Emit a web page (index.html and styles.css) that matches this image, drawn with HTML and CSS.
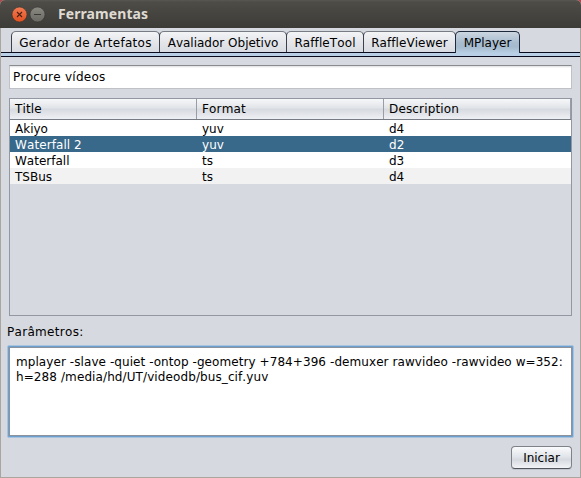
FILE: index.html
```html
<!DOCTYPE html>
<html lang="pt">
<head>
<meta charset="utf-8">
<title>Ferramentas</title>
<link rel="stylesheet" href="styles.css">
</head>
<body>
<div class="window">
  <header class="titlebar">
    <svg class="controls" width="40" height="20" viewBox="0 0 40 20">
      <defs>
        <linearGradient id="close" x1="0" y1="0" x2="0" y2="1"><stop offset="0" stop-color="#f37c54"/><stop offset="1" stop-color="#e2501f"/></linearGradient>
        <linearGradient id="mini" x1="0" y1="0" x2="0" y2="1"><stop offset="0" stop-color="#8b8982"/><stop offset="1" stop-color="#696862"/></linearGradient>
      </defs>
      <circle cx="9.5" cy="10.5" r="7.5" fill="url(#close)" stroke="#35322d" stroke-width=".6"/>
      <path d="M7 8l5 5M12 8l-5 5" stroke="#4a2015" stroke-width="1.1"/>
      <circle cx="27.5" cy="10.5" r="7.5" fill="url(#mini)" stroke="#35342f" stroke-width=".6"/>
      <path d="M24 10.5h7" stroke="#3a3934" stroke-width="1"/>
    </svg>
    <h1 class="title">Ferramentas</h1>
  </header>
  <main class="content">
    <nav class="tabs">
      <button class="tab tab-generator"><span>Gerador de Artefatos</span></button>
      <button class="tab tab-evaluator"><span>Avaliador Objetivo</span></button>
      <button class="tab tab-raffle"><span>RaffleTool</span></button>
      <button class="tab tab-viewer"><span>RaffleViewer</span></button>
      <button class="tab tab-player active"><span>MPlayer</span></button>
    </nav>
    <div class="tab-band"></div>
    <section class="panel">
      <input class="search" type="text" value="Procure vídeos">
      <div class="table-box">
        <div class="row head"><span>Title</span><span>Format</span><span>Description</span></div>
        <div class="row"><span>Akiyo</span><span>yuv</span><span>d4</span></div>
        <div class="row selected"><span>Waterfall 2</span><span>yuv</span><span>d2</span></div>
        <div class="row"><span>Waterfall</span><span>ts</span><span>d3</span></div>
        <div class="row alt"><span>TSBus</span><span>ts</span><span>d4</span></div>
      </div>
      <div class="label">Parâmetros:</div>
      <div class="params"><div class="params-text"><div class="line1">mplayer -slave -quiet -ontop -geometry +784+396 -demuxer rawvideo -rawvideo w=352:</div><div class="line2">h=288 /media/hd/UT/videodb/bus_cif.yuv</div></div></div>
      <button class="start"><span>Iniciar</span></button>
    </section>
  </main>
</div>
</body>
</html>
```
FILE: styles.css
```css
* { box-sizing: border-box; }
body {
  margin: 0;
  background: #b04a4c;
  color: #000;
  font: 12px/16px "DejaVu Sans", sans-serif;
  font-kerning: none;
}
button, input { margin: 0; padding: 0; color: inherit; font: inherit; font-kerning: none; }
.window {
  display: flex;
  flex-direction: column;
  width: 581px;
  height: 478px;
  overflow: hidden;
  border-radius: 5px 5px 0 0;
  background: #d6d9df;
}
.titlebar {
  display: flex;
  flex: none;
  height: 28px;
  padding: 4px 0 0 10px;
  background: linear-gradient(#595751 0, #4e4c47 2px, #3c3b37 100%);
}
.title {
  margin: 0 0 0 8px;
  color: #dfdbd2;
  font: bold 14px/20px "Noto Sans", sans-serif;
  letter-spacing: .08px;
}
.content {
  flex: 1;
  border: 1px solid #aaa59e;
  border-top: 0;
}
.tabs {
  display: flex;
  height: 25px;
  padding: 3px 0 0 10px;
  border-bottom: 1px solid #0b0b20;
}
.tab {
  height: 21px;
  margin-right: -1px;
  padding-top: 2px;
  border: 1px solid #3c404b;
  border-top-color: #777b83;
  border-bottom: 0;
  border-radius: 5px 5px 0 0;
  background: linear-gradient(#f3f4f6, #e4e6ea 50%, #d8dbe1);
  line-height: 18px;
  white-space: nowrap;
}
.tab-generator { width: 149px; letter-spacing: .3px; }
.tab-evaluator { width: 128px; }
.tab-raffle { width: 78px; letter-spacing: .1px; }
.tab-viewer { width: 93px; letter-spacing: .05px; }
.tab-player { width: 65px; }
.active {
  height: 22px;
  padding-bottom: 1px;
  border-color: #1d2a3c;
  background: linear-gradient(#ccd7e1, #a9bdcf 50%, #a5bacd 70%, #b8cee2);
}
.tab-band {
  height: 4px;
  border-bottom: 1px solid #0b0b20;
  background: #b8cfe5;
}
.panel {
  display: flex;
  flex-direction: column;
  padding: 8px 8px 0;
}
.search {
  height: 24px;
  padding: 0 3px;
  border: 1px solid #bfc1c6;
  border-top: 1px solid #888b90;
  border-radius: 0;
  outline: 0;
  background: linear-gradient(#dedede, #fff 2px);
  letter-spacing: .26px;
}
.table-box {
  height: 218px;
  margin-top: 9px;
  border: 1px solid #9297a1;
}
.row {
  display: grid;
  grid-template-columns: 187px 187px 1fr;
  height: 16px;
  background: #fff;
  line-height: 18px;
}
.row span { height: 100%; padding-left: 5px; }
.head {
  height: 21px;
  border-bottom: 1px solid #767b84;
  background: linear-gradient(#f6f7f9, #e1e4e8 45%, #d6d9df 50%, #eef0f4);
  line-height: 20px;
  letter-spacing: .15px;
}
.head span { border-right: 1px solid #999da6; }
.selected { background: #39698a; color: #fff; letter-spacing: .08px; }
.alt { background: #f2f2f2; }
.label { height: 29px; margin: 8px 0 0 -2px; letter-spacing: .3px; }
.params {
  height: 93px;
  margin: -8px -2px 0;
  padding: 1px;
  border: 1px solid #a8c3de;
  border-radius: 2px;
  background: #6b9fd0;
}
.params-text {
  height: 89px;
  padding: 7px 6px;
  border: 1px solid #8d929b;
  background: #fff;
  line-height: 15px;
  white-space: nowrap;
}
.line1 { letter-spacing: .075px; }
.line2 { letter-spacing: .1px; }
.start {
  align-self: flex-end;
  width: 61px;
  height: 23px;
  margin-top: 8px;
  border: 1px solid #7f8289;
  border-bottom-color: #50545d;
  border-radius: 4px;
  background: linear-gradient(#fafbfc, #e0e3e8 48%, #d6d9df 60%, #f1f3f6);
  box-shadow: 0 1px 0 #c1c4ca;
}
```
